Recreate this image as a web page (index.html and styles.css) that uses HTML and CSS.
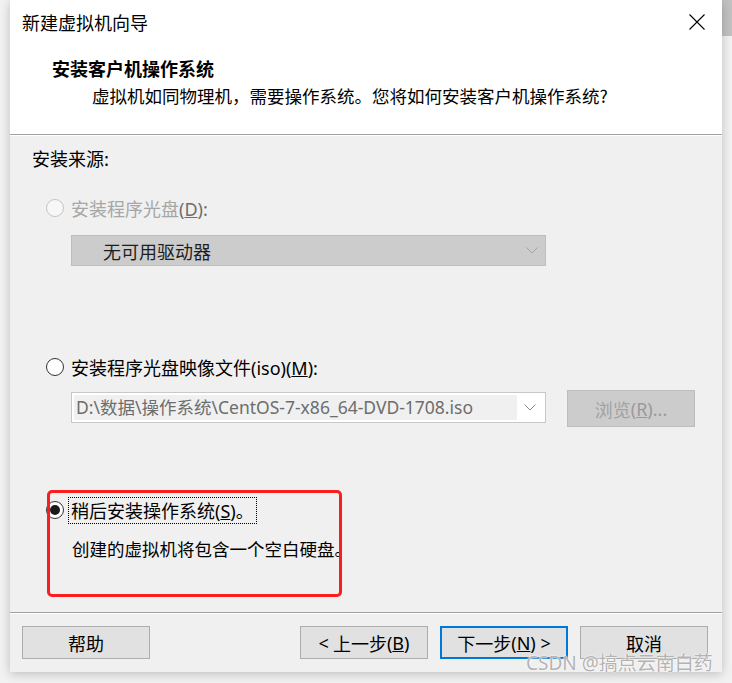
FILE: index.html
```html
<!DOCTYPE html>
<html lang="zh-CN">
<head>
<meta charset="utf-8">
<title>新建虚拟机向导</title>
<link rel="stylesheet" href="styles.css">
</head>
<body>
<div class="scrollthumb"></div>
<div class="window">
  <div class="top">
    <div class="titlebar">
      <span class="title">新建虚拟机向导</span>
      <svg class="close" width="16" height="16" viewBox="0 0 16 16"><path d="M0.5 0.5 L15.5 15.5 M15.5 0.5 L0.5 15.5" stroke="#000" stroke-width="1.1" fill="none"/></svg>
    </div>
    <div class="head">
      <div class="head-title">安装客户机操作系统</div>
      <div class="head-sub">虚拟机如同物理机，需要操作系统。您将如何安装客户机操作系统?</div>
    </div>
  </div>
  <div class="sep"></div>
  <div class="content">
    <div class="label">安装来源:</div>

    <div class="radio-row row1 disabled">
      <span class="radio"></span>
      <span class="rtext">安装程序光盘<span class="lat">(<u>D</u>):</span></span>
    </div>
    <div class="select disabled-select">
      <span class="select-text">无可用驱动器</span>
      <svg class="chev" width="12" height="7" viewBox="0 0 12 7"><path d="M0.5 0.5 L6 6 L11.5 0.5" stroke="#a3a3a3" stroke-width="1" fill="none"/></svg>
    </div>

    <div class="radio-row row2">
      <span class="radio"></span>
      <span class="rtext">安装程序光盘映像文件<span class="lat">(iso)(<u>M</u>):</span></span>
    </div>
    <div class="combo-row">
      <div class="combo">
        <span class="combo-text">D:\数据\操作系统\CentOS-7-x86_64-DVD-1708.iso</span>
        <span class="combo-btn"><svg width="12" height="7" viewBox="0 0 12 7"><path d="M0.5 0.5 L6 6 L11.5 0.5" stroke="#8a8a8a" stroke-width="1" fill="none"/></svg></span>
      </div>
      <div class="browse">浏览<span class="lat">(<u>R</u>)...</span></div>
    </div>

    <div class="radio-row row3">
      <span class="radio checked"></span>
      <span class="rtext focus">稍后安装操作系统<span class="lat">(<u>S</u>)</span>。</span>
    </div>
    <div class="desc">创建的虚拟机将包含一个空白硬盘。</div>
  </div>
  <div class="sep"></div>
  <div class="buttons">
    <div class="btn">帮助</div>
    <div class="spacer"></div>
    <div class="btn"><span class="lat">&lt;</span>&nbsp;上一步<span class="lat">(<u>B</u>)</span></div>
    <div class="btn primary">下一步<span class="lat">(<u>N</u>) &gt;</span></div>
    <div class="btn">取消</div>
  </div>
  <div class="redbox"></div>
</div>
<div class="watermark">CSDN @搞点云南白药</div>
</body>
</html>
```
FILE: styles.css
```css
html, body {
  margin: 0;
  padding: 0;
}
body {
  width: 732px;
  height: 683px;
  overflow: hidden;
  background: #f2f2f2;
  font-family: "Noto Sans CJK SC", "Noto Sans", sans-serif;
  font-size: 18px;
  color: #000;
  position: relative;
}
.lat {
  font-family: "Noto Sans", "Noto Sans CJK SC", sans-serif;
}
.scrollthumb {
  position: absolute;
  left: 722px;
  top: 0;
  width: 10px;
  height: 36px;
  background: #c2c2c2;
}
.window {
  position: relative;
  margin-left: 10px;
  width: 712px;
  height: 672px;
  background: #f0f0f0;
  box-shadow: 0 2px 10px rgba(0, 0, 0, 0.22);
  display: flex;
  flex-direction: column;
}
.top {
  background: #fff;
  height: 134px;
  flex: none;
}
.titlebar {
  height: 44px;
  display: flex;
  align-items: center;
  justify-content: space-between;
  padding: 0 17px 0 12px;
}
.title {
  line-height: 24px;
  font-size: 18px;
}
.close {
  display: block;
}
.head {
  padding-left: 42px;
  padding-top: 12px;
}
.head-title {
  font-weight: bold;
  line-height: 24px;
  font-size: 18px;
}
.head-sub {
  margin-top: 4px;
  padding-left: 40px;
  line-height: 24px;
  font-size: 17.5px;
}
.sep {
  flex: none;
  height: 0;
  border-top: 1px solid #a0a0a0;
  border-bottom: 1px solid #ffffff;
}
.content {
  flex: none;
  height: 476px;
  padding-left: 22px;
}
.label {
  margin-top: 10px;
  line-height: 24px;
}
.radio-row {
  display: flex;
  align-items: center;
  height: 24px;
  margin-left: 14px;
}
.radio {
  width: 16px;
  height: 16px;
  border: 1.5px solid #333;
  border-radius: 50%;
  background: #fff;
  margin-right: 7px;
  position: relative;
  flex: none;
}
.radio.checked::after {
  content: "";
  position: absolute;
  left: 3px;
  top: 3px;
  width: 10px;
  height: 10px;
  border-radius: 50%;
  background: #1a1a1a;
}
.disabled .radio {
  border-color: #c4c4c4;
  background: #f7f7f7;
}
.disabled .rtext {
  color: #a6a6a6;
}
.disabled .rtext .lat {
  color: #6e6e6e;
}
.rtext {
  line-height: 24px;
  white-space: nowrap;
}
.row1 {
  margin-top: 26px;
}
.select {
  margin-top: 15px;
  margin-left: 39px;
  width: 435px;
  height: 29px;
  border: 1px solid #bdbdbd;
  background: #cccccc;
  display: flex;
  align-items: center;
  justify-content: space-between;
  padding: 0 7px 0 31px;
  box-sizing: content-box;
}
.select-text {
  color: #1e1e1e;
  line-height: 24px;
}
.row2 {
  margin-top: 89px;
}
.combo-row {
  margin-top: 11px;
  margin-left: 39px;
  display: flex;
  align-items: flex-start;
  gap: 21px;
}
.combo {
  margin-top: 2px;
  width: 475px;
  height: 31px;
  box-sizing: border-box;
  border: 1px solid #c8c8c8;
  background: #fff;
  padding: 2px;
  display: flex;
}
.combo-text {
  flex: none;
  width: 441px;
  background: #f0f0f0;
  color: #6d6d6d;
  font-family: "Noto Sans", "Noto Sans CJK SC", sans-serif;
  font-size: 17.5px;
  line-height: 25px;
  padding-left: 2px;
  white-space: nowrap;
  overflow: hidden;
}
.combo-btn {
  flex: 1;
  display: flex;
  align-items: center;
  justify-content: center;
}
.browse {
  width: 128px;
  height: 37px;
  box-sizing: border-box;
  border: 1px solid #bdbdbd;
  background: #cccccc;
  color: #a3a3a3;
  display: flex;
  align-items: center;
  justify-content: center;
  line-height: 24px;
}
.browse .lat {
  color: #9a9a9a;
}
.row3 {
  margin-top: 71px;
}
.focus {
  outline: 1px dotted #000;
  outline-offset: 0;
  padding: 0 2px 0 0;
  margin-left: -2px;
  padding-left: 2px;
}
.desc {
  margin-top: 15px;
  margin-left: 40px;
  line-height: 24px;
  font-size: 17.5px;
}
.buttons {
  flex: 1;
  display: flex;
  align-items: flex-start;
  padding: 12px 14px 0 12px;
  gap: 12px;
}
.spacer {
  flex: 1;
}
.btn {
  width: 128px;
  height: 33px;
  box-sizing: border-box;
  border: 1px solid #adadad;
  background: #e1e1e1;
  display: flex;
  align-items: center;
  justify-content: center;
  line-height: 24px;
  white-space: nowrap;
}
.btn.primary {
  border: 2px solid #0078d7;
}
.redbox {
  position: absolute;
  left: 37px;
  top: 490px;
  width: 295px;
  height: 107px;
  box-sizing: border-box;
  border: 3.5px solid #fb1e1e;
  border-radius: 5px;
}
.watermark {
  position: absolute;
  left: 526px;
  top: 650px;
  font-family: "Noto Sans", "Noto Sans CJK SC", sans-serif;
  font-size: 19px;
  line-height: 26px;
  color: #b3b3b3;
  text-shadow: 0 0 2px #fff, 0 0 1px #fff;
  white-space: nowrap;
}
```
